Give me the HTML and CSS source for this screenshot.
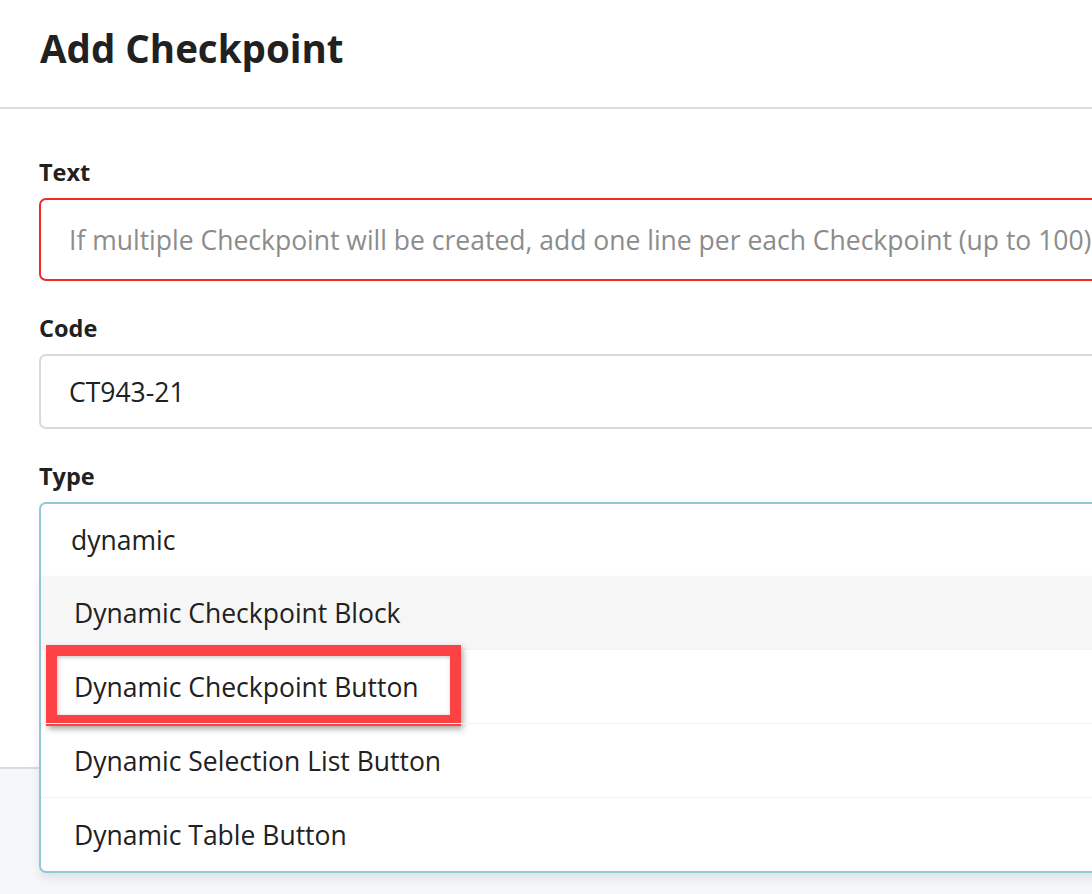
FILE: index.html
```html
<!DOCTYPE html>
<html lang="en">
<head>
<meta charset="utf-8">
<title>Add Checkpoint</title>
<link rel="stylesheet" href="styles.css">
</head>
<body>
<div class="modal">
  <div class="modal-header">
    <h1 class="modal-title">Add Checkpoint</h1>
  </div>
  <div class="modal-body">
    <div class="form-group">
      <label class="form-label">Text</label>
      <div class="form-control textarea is-invalid"><span class="placeholder">If multiple Checkpoint will be created, add one line per each Checkpoint (up to 100)</span></div>
    </div>
    <div class="form-group">
      <label class="form-label">Code</label>
      <div class="form-control">CT943-21</div>
    </div>
    <div class="form-group">
      <label class="form-label">Type</label>
      <div class="combo">
        <div class="combo-input">dynamic</div>
        <ul class="combo-menu">
          <li class="combo-option active">Dynamic Checkpoint Block</li>
          <li class="combo-option highlighted">Dynamic Checkpoint Button<span class="annotation"></span></li>
          <li class="combo-option">Dynamic Selection List Button</li>
          <li class="combo-option">Dynamic Table Button</li>
        </ul>
      </div>
    </div>
  </div>
  <div class="modal-footer"></div>
</div>
</body>
</html>
```

FILE: styles.css
```css
html, body {
  margin: 0;
  padding: 0;
  height: 100%;
  overflow: hidden;
  background: #ffffff;
}

body {
  font-family: "Open Sans", "Noto Sans", sans-serif;
  color: #212121;
}

.modal {
  width: 1200px;
  min-height: 100%;
  display: flex;
  flex-direction: column;
}

.modal-header {
  box-sizing: border-box;
  height: 109px;
  padding: 25px 40px 0;
  border-bottom: 2px solid #dcdcdc;
}

.modal-title {
  margin: 0;
  font-size: 38.5px;
  line-height: 1.2;
  font-weight: 700;
  color: #212121;
}

.modal-body {
  padding: 48px 39px 0;
  height: 658px;
  box-sizing: border-box;
}

.form-group {
  margin-bottom: 32px;
}

.form-label {
  display: block;
  font-size: 23.5px;
  line-height: 30px;
  font-weight: 700;
  margin-bottom: 11px;
}

.form-control {
  box-sizing: border-box;
  height: 75px;
  border: 2px solid #dadada;
  border-radius: 7px;
  padding: 0 28px;
  display: flex;
  align-items: center;
  font-size: 26.5px;
  white-space: nowrap;
  overflow: hidden;
}

.form-control.textarea {
  height: 83px;
}

.form-control.is-invalid {
  border-color: #f42a2a;
}

.placeholder {
  color: #8c8c8c;
}

.combo {
  position: relative;
}

.combo-input {
  box-sizing: border-box;
  height: 74px;
  border: 2px solid #92c7d9;
  border-bottom: none;
  border-radius: 7px 7px 0 0;
  padding: 0 30px;
  display: flex;
  align-items: center;
  font-size: 26.5px;
}

.combo-menu {
  position: absolute;
  left: 0;
  right: 0;
  top: 100%;
  margin: 0;
  padding: 0;
  list-style: none;
  background: #ffffff;
  border: 2px solid #92c7d9;
  border-top: none;
  border-radius: 0 0 7px 7px;
  box-shadow: 0 6px 10px rgba(0, 0, 0, 0.08);
  z-index: 2;
}

.combo-option {
  position: relative;
  box-sizing: border-box;
  height: 74px;
  padding: 0 33px;
  display: flex;
  align-items: center;
  font-size: 26.5px;
  border-top: 1px solid #f2f2f2;
}

.combo-option:first-child {
  border-top: none;
  height: 73px;
}

.combo-option.active {
  background: #f6f6f6;
}

.annotation {
  position: absolute;
  left: 5px;
  top: -5px;
  width: 415px;
  height: 81px;
  box-sizing: border-box;
  border: 11px solid #fc4245;
  box-shadow: 2px 3px 6px rgba(0, 0, 0, 0.35), inset 1px 1px 4px rgba(0, 0, 0, 0.25);
}

.modal-footer {
  flex: 1;
  border-top: 2px solid #dadada;
  background: #f6f7f9;
}
```
